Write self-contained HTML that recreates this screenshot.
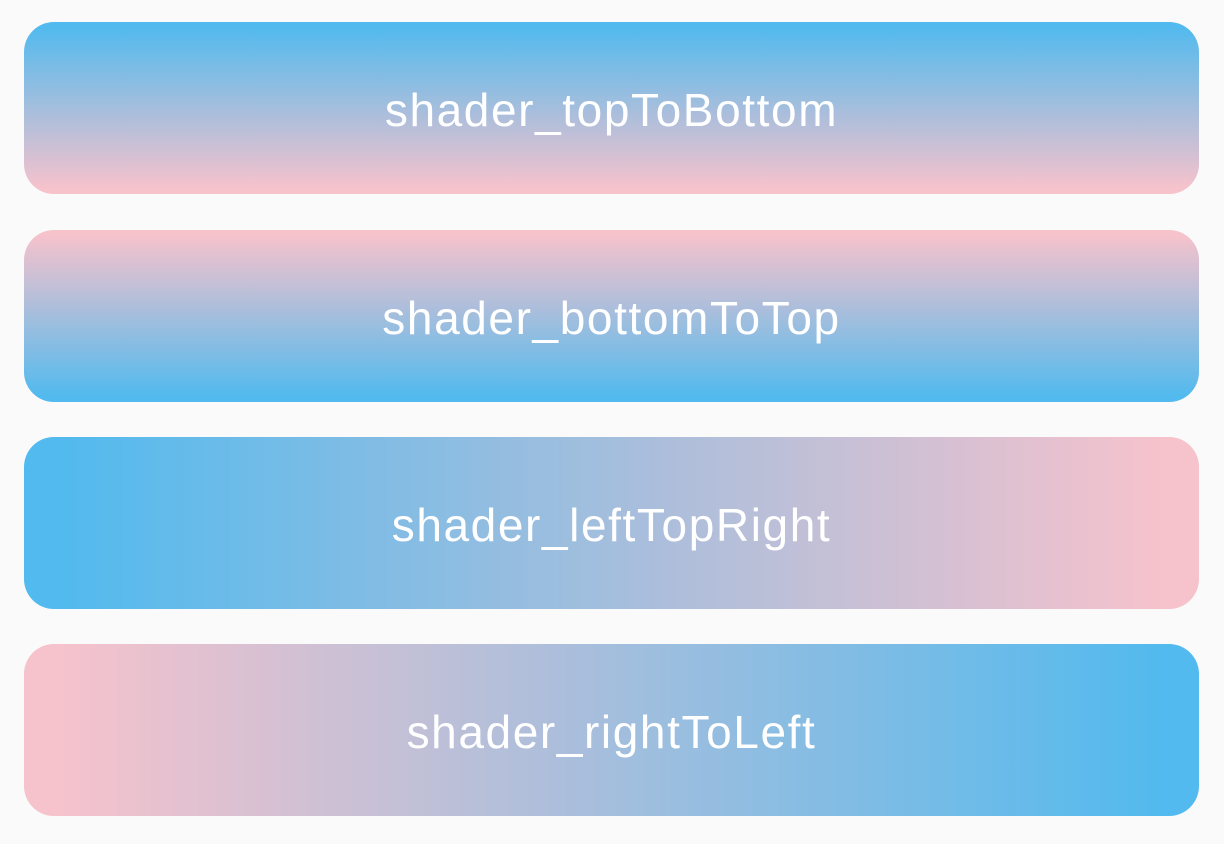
<!DOCTYPE html>
<html><head><style>
html,body{margin:0;padding:0;background:#fafafa;width:1224px;height:844px;overflow:hidden}
.b{position:absolute;left:24px;width:1175px;height:172px;border-radius:30px;color:#fff;font-family:"Liberation Sans",sans-serif;font-size:46px;letter-spacing:1.6px;display:flex;align-items:center;justify-content:center;padding-top:3px;box-sizing:border-box}
</style></head><body>
<div class="b" style="top:22px;background:linear-gradient(to bottom,#52baee 3%,#f6c2cc 97%)">shader_topToBottom</div>
<div class="b" style="top:230px;background:linear-gradient(to top,#52baee 3%,#f6c2cc 97%)">shader_bottomToTop</div>
<div class="b" style="top:437px;background:linear-gradient(to right,#52baee 3%,#f6c2cc 97%)">shader_leftTopRight</div>
<div class="b" style="top:644px;background:linear-gradient(to left,#52baee 3%,#f6c2cc 97%)">shader_rightToLeft</div>
</body></html>
